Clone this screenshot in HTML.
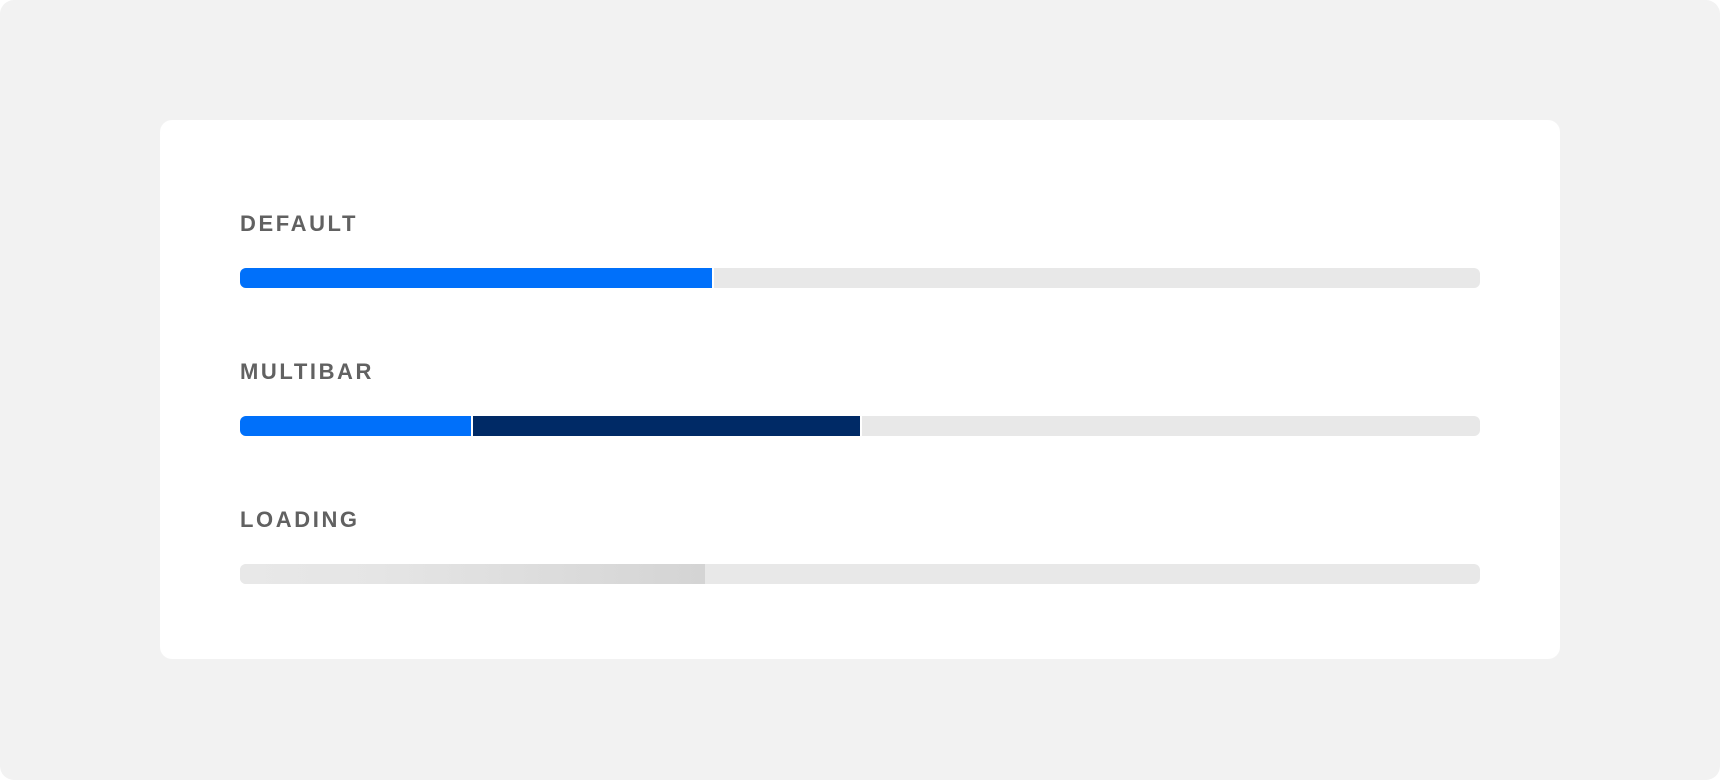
<!DOCTYPE html>
<html><head><style>
html,body{margin:0;padding:0;background:#fff;}
.page{position:relative;width:1720px;height:780px;background:#f2f2f2;border-radius:14px;overflow:hidden;}
.card{position:absolute;left:160px;top:120px;width:1400px;height:539px;background:#fff;border-radius:12px;}
.lbl{position:absolute;left:240px;font-family:"Liberation Sans",sans-serif;font-weight:bold;font-size:22px;letter-spacing:2.6px;color:#616161;line-height:22px;}
.bar{position:absolute;left:240px;width:1240px;height:20px;background:#e8e8e8;border-radius:6px;overflow:hidden;}
.seg{position:absolute;top:0;height:20px;}
</style></head><body>
<div class="page">
<div class="card"></div>
<div class="lbl" style="top:213px">DEFAULT</div>
<div class="bar" style="top:268px"><div class="seg" style="left:0;width:472px;background:#0070fa;border-right:2px solid #fff"></div></div>
<div class="lbl" style="top:361px">MULTIBAR</div>
<div class="bar" style="top:416px">
<div class="seg" style="left:0;width:231px;background:#0070fa;border-right:2px solid #fff"></div>
<div class="seg" style="left:233px;width:387px;background:#002a66;border-right:2px solid #fff"></div>
</div>
<div class="lbl" style="top:509px">LOADING</div>
<div class="bar" style="top:564px"><div class="seg" style="left:0;width:465px;background:linear-gradient(90deg,#e8e8e8 0%,#e5e5e5 30%,#d4d4d4 100%)"></div></div>
</div>
</body></html>
